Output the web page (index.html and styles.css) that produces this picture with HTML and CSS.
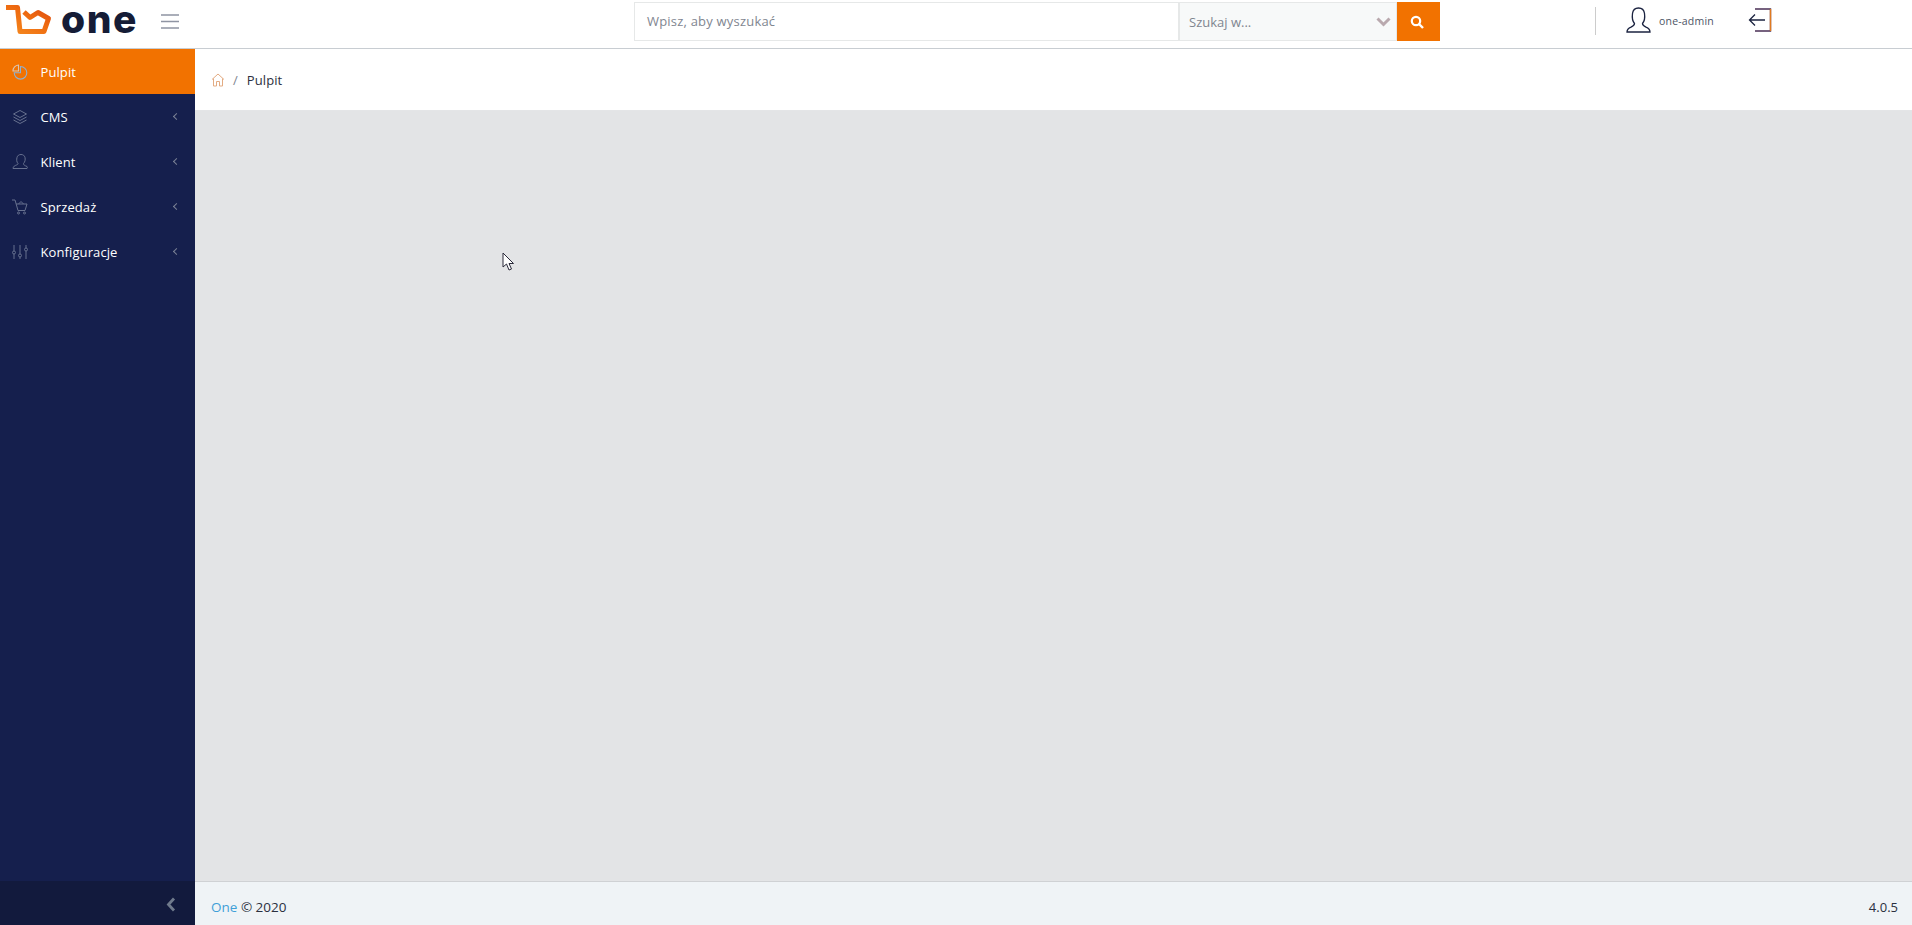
FILE: index.html
```html
<!DOCTYPE html>
<html lang="pl">
<head>
<meta charset="utf-8">
<title>One</title>
<link rel="stylesheet" href="styles.css">
</head>
<body>
<header class="topbar">
  <div class="brand">
    <svg class="logo-mark" viewBox="0 0 50 40" width="50" height="40"><defs><linearGradient id="lg" x1="0" y1="1" x2="1" y2="0"><stop offset="0" stop-color="#f58a1f"/><stop offset="0.6" stop-color="#ee6a10"/><stop offset="1" stop-color="#dd4a10"/></linearGradient></defs><path d="M3 3.500H14.500L17 27.500H41L45.500 14.500L35 8.500L27 13.500L21 8" fill="none" stroke="url(#lg)" stroke-width="5" stroke-linejoin="round"/></svg>
    <span class="logo-text">one</span>
    <svg class="burger" viewBox="0 0 18 15" width="18" height="15"><path d="M0 1h18M0 7.500h18M0 14h18" stroke="#8f94a3" stroke-width="1.600"/></svg>
  </div>
  <form class="search">
    <div class="search-input">Wpisz, aby wyszukać</div>
    <div class="search-select">
      <span>Szukaj w...</span>
      <svg viewBox="0 0 15 10" width="15" height="10"><path d="M1.500 1.500L7.500 7.500l6-6" fill="none" stroke="#b9a9ae" stroke-width="3"/></svg>
    </div>
    <div class="search-btn"><svg viewBox="0 0 14 14" width="14" height="14"><circle cx="6" cy="6" r="4.200" fill="none" stroke="#fff" stroke-width="2.200"/><path d="M9 9l4 4" stroke="#fff" stroke-width="2.400"/></svg></div>
  </form>
  <div class="user">
    <svg class="user-icon" viewBox="0 0 25 26" width="25" height="26"><path d="M8.500 16.500C6 13.500 6 10 6.500 6.500C7 2.500 10 1 12.500 1S18 2.500 18.500 6.500C19 10 19 13.500 16.500 16.500C16.500 18.500 17.500 19 20 20.200C22.500 21.300 24 22.500 24 25H1C1 22.500 2.500 21.300 5 20.200C7.500 19 8.500 18.500 8.500 16.500Z" fill="none" stroke="#1b2340" stroke-width="1.300"/></svg>
    <span class="user-name">one-admin</span>
    <svg class="logout" viewBox="0 0 24 24" width="24" height="24"><path d="M7 1H22.500V23H7" fill="none" stroke="#4a2f55" stroke-width="1.400"/><path d="M22.500 1V23" stroke="#e07a1f" stroke-width="1.400"/><path d="M17 12H1.500M7 6.500L1.500 12L7 17.500" fill="none" stroke="#1b2340" stroke-width="1.300"/></svg>
  </div>
</header>
<div class="layout">
  <aside class="sidebar">
    <nav class="menu">
      <a class="menu-item active">
        <svg viewBox="0 0 16 16" width="16" height="16"><path d="M8.500 2.500A6.300 6.300 0 1 1 2.200 8.800H8.500Z" fill="none" stroke="#8fb0d0" stroke-width="1.100"/><path d="M6.500 1A6 6 0 0 0 1 7H6.500Z" fill="none" stroke="#d9c7b5" stroke-width="1.100"/></svg>
        <span>Pulpit</span>
      </a>
      <a class="menu-item">
        <svg viewBox="0 0 16 16" width="16" height="16"><g fill="none" stroke="#67718f" stroke-width="1"><path d="M8 1.500L14.500 5 8 8.500 1.500 5Z"/><path d="M1.500 8L8 11.500 14.500 8"/><path d="M1.500 11L8 14.500 14.500 11"/></g></svg>
        <span>CMS</span><i class="chev"></i>
      </a>
      <a class="menu-item">
        <svg viewBox="0 0 16 16" width="16" height="16"><path d="M6 9.500C4.500 8 4.500 5.500 5 3.500C5.500 1.500 7 0.500 9 0.500S12.500 1.500 13 3.500C13.500 5.500 13 8 11.500 9.500C11.500 11 12.500 11.500 15 12.500C15.500 13 15.500 14 15 14.500H1C1 12.500 3 11.500 4.500 11C5.500 10.500 6 10.500 6 9.500Z" fill="none" stroke="#67718f" stroke-width="1"/></svg>
        <span>Klient</span><i class="chev"></i>
      </a>
      <a class="menu-item">
        <svg viewBox="0 0 16 16" width="16" height="16"><g fill="none" stroke="#67718f" stroke-width="1"><path d="M0 1H3L6 11.500H13L15 5H4"/><circle cx="6.500" cy="14" r="1"/><circle cx="12.500" cy="14" r="1"/><path d="M6.500 5L9 2.500 11.500 5"/></g></svg>
        <span>Sprzedaż</span><i class="chev"></i>
      </a>
      <a class="menu-item">
        <svg viewBox="0 0 16 16" width="16" height="16"><g fill="none" stroke="#67718f" stroke-width="1"><path d="M2 1V7M2 10V15M8 1V10M8 13V15M14 1V4M14 7V15"/><circle cx="2" cy="8.500" r="1.500"/><circle cx="8" cy="11.500" r="1.500"/><circle cx="14" cy="5.500" r="1.500"/></g></svg>
        <span>Konfiguracje</span><i class="chev"></i>
      </a>
    </nav>
    <div class="collapse"><svg viewBox="0 0 10 15" width="10" height="15"><path d="M8 1.500L2.500 7.500 8 13.500" fill="none" stroke="#6f7a8c" stroke-width="2.800"/></svg></div>
  </aside>
  <main class="main">
    <div class="breadcrumb">
      <svg viewBox="0 0 14 14" width="14" height="14"><path d="M1 6.500L7 1l6 5.500M2.500 5.500V13H5.500V8.500H8.500V13H11.500V5.500" fill="none" stroke="#e3ab82" stroke-width="1"/></svg>
      <span class="sep">/</span>
      <span class="crumb">Pulpit</span>
    </div>
    <div class="content"></div>
    <footer class="footer">
      <span class="copy"><a class="footer-link">One</a> © 2020</span>
      <span class="version">4.0.5</span>
    </footer>
  </main>
</div>
<svg class="cursor" viewBox="0 0 13 20" width="13" height="20"><path d="M1 1V15L4.500 12L7 18L9.500 17L7 11.500H11.500Z" fill="#fff" stroke="#2a2a3a" stroke-width="1"/></svg>
</body>
</html>
```
FILE: styles.css
```css
* { box-sizing: border-box; }
html, body { margin: 0; height: 100%; overflow: hidden; }
body {
  display: flex;
  flex-direction: column;
  height: 925px;
  background: #fff;
  font-family: "Open Sans", sans-serif;
  font-size: 13px;
  color: #1f2433;
}
.topbar {
  height: 49px;
  flex: none;
  display: flex;
  align-items: flex-start;
  background: #fff;
  border-bottom: 1px solid #c8cdd2;
}
.brand {
  width: 634px;
  height: 48px;
  display: flex;
  align-items: center;
  padding-left: 3px;
  flex: none;
}
.logo-text {
  margin-left: 8px;
  margin-bottom: 10px;
  width: 99px;
  font-family: Inter, sans-serif;
  font-weight: 800;
  font-size: 39px;
  letter-spacing: 1.500px;
  line-height: 38px;
  color: #151c36;
}
.burger { margin-left: 1px; margin-bottom: 6px; }
.search {
  display: flex;
  height: 39px;
  margin-top: 2px;
  width: 806px;
  flex: none;
}
.search-input {
  width: 546px;
  border: 1px solid #e6e8e8;
  border-right-width: 2px;
  padding: 0 12px;
  line-height: 37px;
  letter-spacing: 0.2px;
  color: #7f8690;
}
.search-select {
  width: 217px;
  display: flex;
  align-items: center;
  justify-content: space-between;
  background: #f7f9f9;
  border: 1px solid #e6e8e8;
  border-left: 0;
  padding: 0 5px 0 9px;
  color: #7f8690;
}
.search-btn {
  width: 43px;
  padding-right: 4px;
  background: #f27200;
  display: flex;
  align-items: center;
  justify-content: center;
}
.user {
  display: flex;
  align-items: center;
  margin-left: 155px;
  margin-top: 7px;
  height: 28px;
  padding-left: 30px;
  border-left: 1px solid #ccc;
}
.user-icon { margin-bottom: 2px; }
.user-name {
  margin-left: 8px;
  width: 89px;
  font-size: 10.500px;
  letter-spacing: 0.2px;
  color: #4d5566;
}
.logout { margin-bottom: 2px; }
.layout { flex: 1; display: flex; min-height: 0; }
.sidebar {
  width: 195px;
  flex: none;
  display: flex;
  flex-direction: column;
  justify-content: space-between;
  background: #151f4d;
}
.menu { display: flex; flex-direction: column; }
.menu-item {
  height: 45px;
  display: flex;
  align-items: center;
  padding: 0 15px 0 12px;
  color: #fff;
  font-size: 13px;
  letter-spacing: 0.1px;
}
.menu-item span { margin-left: 12.500px; flex: 1; }
.menu-item.active { background: #f27200; }
.chev {
  width: 5px;
  height: 5px;
  border-left: 1.500px solid #7b8296;
  border-bottom: 1.500px solid #7b8296;
  transform: rotate(45deg);
  margin-right: 1px;
}
.collapse {
  height: 44px;
  background: #121a3d;
  display: flex;
  align-items: center;
  justify-content: flex-end;
  padding: 3px 19px 0 0;
}
.main { flex: 1; display: flex; flex-direction: column; min-width: 0; }
.breadcrumb {
  height: 62px;
  flex: none;
  display: flex;
  align-items: center;
  gap: 8px;
  padding-left: 16px;
  background: #fff;
  border-bottom: 1px solid #e4e5e7;
}
.crumb { margin-left: 1px; letter-spacing: 0.1px; color: #2b3040; }
.sep { color: #7f8690; }
.content { flex: 1; background: #e3e4e6; }
.footer {
  height: 44px;
  flex: none;
  display: flex;
  align-items: center;
  justify-content: space-between;
  padding: 6px 14px 0 16px;
  background: #eff3f6;
  border-top: 1px solid #cfd1d4;
  color: #2b3040;
}
.copy { font-size: 13.500px; }
.version { font-size: 13px; }
.footer-link { color: #3f9fd8; }
.cursor { position: absolute; left: 502px; top: 252px; }
```
